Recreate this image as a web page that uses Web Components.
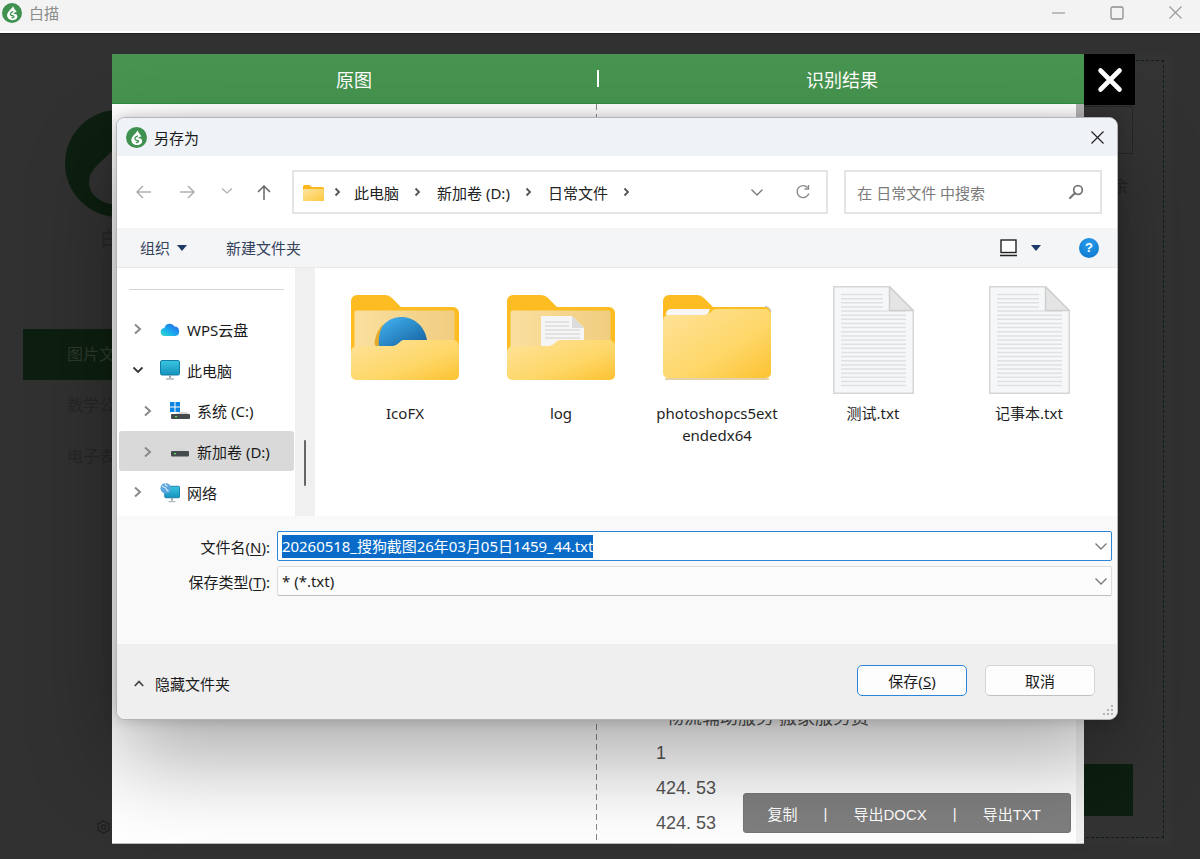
<!DOCTYPE html>
<html lang="zh"><head><meta charset="utf-8"><title>白描</title>
<style>html,body{margin:0;padding:0;background:#313131;font-family:"Noto Sans","Noto Sans CJK SC",sans-serif}</style>
</head><body>
<bm-app>
  <bm-titlebar slot="bar">白描</bm-titlebar>
  <bm-sidebar slot="left"></bm-sidebar>
  <bm-panel slot="right"></bm-panel>
  <bm-modal slot="over"></bm-modal>
  <bm-dialog slot="over"></bm-dialog>
</bm-app>
<script>
const LOGO=(c='#3f9150',w='#fff')=>`<svg viewBox="0 0 24 24" width="100%" height="100%" style="display:block"><circle cx="12" cy="12" r="12" fill="${c}"/><path d="M13.2 3.6C12.6 6.4 8 9 6.4 13c-1.300 4 2 7.600 6.100 7.600 3.900 0 6.300-2.300 5.900-5-.4-2.600-3-3.400-5-2.300.8-1.500 2.300-2.700 4.300-2.500-1.600-2.300-3.500-4.400-4.500-7.200z" fill="${w}"/><path d="M13 10.300c-2.200.8-3.400 2.500-2.600 4 .7 1.300 3.100.6 3.800 1.600.6.900-.7 2-2.300 1.800" fill="none" stroke="${c}" stroke-width="1.500" stroke-linecap="round"/></svg>`;
const def=(n,html,init)=>customElements.define(n,class extends HTMLElement{constructor(){super();const r=this.attachShadow({mode:'open'});r.innerHTML=typeof html==='function'?html(this):html;}connectedCallback(){if(init&&!this._i){this._i=1;init(this)}}});
const chev=(d,col='#8a8a8a',w=2)=>`<svg width="10" height="14" viewBox="0 0 10 14" style="display:block"><path d="${d}" fill="none" stroke="${col}" stroke-width="${w}"/></svg>`;
const smallChev=`<svg width="7" height="10" viewBox="0 0 7 10" style="display:block"><path d="M1.500 1.500 5 5 1.500 8.500" fill="none" stroke="#555" stroke-width="1.800"/></svg>`;
const downChev=`<svg width="14" height="9" viewBox="0 0 14 9" style="display:block"><path d="M1.500 1.500 7 7l5.500-5.500" fill="none" stroke="#777" stroke-width="1.300"/></svg>`;

def('bm-app',`<style>
:host{display:flex;flex-direction:column;width:1200px;height:859px;overflow:hidden;position:relative;background:#313131}
.stage{flex:1;display:flex;justify-content:space-between;background:#313131;border-top:1px solid #232323;min-height:0}
</style><slot name="bar"></slot><div class="stage"><slot name="left"></slot><slot name="right"></slot></div><slot name="over"></slot>`);

def('bm-titlebar',`<style>
:host{display:flex;align-items:center;height:31px;background:#f3f3f3;border-bottom:2px solid #fff;color:#8b8b8b;font-size:15px;padding-left:2px}
.logo{width:20px;height:20px;margin:0 7px 6px 0}
.t{margin-bottom:6px}
.sp{flex:1}
svg{display:block}
.c{display:flex;align-items:center;margin-bottom:6px;padding-right:18px;gap:45px}
</style><div class="logo">${LOGO()}</div><div class="t"><slot></slot></div><div class="sp"></div>
<div class="c">
<svg width="13" height="13" viewBox="0 0 13 13"><path d="M0 7h13" stroke="#9a9a9a" stroke-width="1.200"/></svg>
<svg width="14" height="14" viewBox="0 0 14 14"><rect x="1" y="1" width="12" height="12" rx="1.500" fill="none" stroke="#8f8f8f" stroke-width="1.300"/></svg>
<svg width="13" height="13" viewBox="0 0 13 13"><path d="M.5.500l12 12M12.500.500l-12 12" stroke="#9a9a9a" stroke-width="1.200"/></svg>
</div>`);

def('bm-sidebar',`<style>
:host{display:flex;flex-direction:column;width:200px;padding-left:23px;box-sizing:content-box;color:#262626;font-size:16px}
.logo{width:107px;height:107px;margin:76px 0 0 42px}
.cap{margin:9px 0 0 77px;font-size:19px;line-height:26px;height:26px;color:#262626}
.menu{margin-top:77px;display:flex;flex-direction:column}
.i{height:51px;line-height:51px;padding-left:44px}
.i.on{background:#0d1f10;color:#2b3a2d}
.gear{margin:auto 0 25px 73px;width:15px;height:16px}
</style>
<div class="logo"><svg viewBox="0 0 107 107" width="107" height="107"><circle cx="53.500" cy="53.500" r="53.500" fill="#0c1f10"/><path d="M58 25C52 44 24 54 24 72c0 15 15 23 32 23h30V30z" fill="#313131"/></svg></div>
<div class="cap">白描</div>
<div class="menu"><div class="i on">图片文字</div><div class="i">数学公式</div><div class="i">电子表格</div></div>
<div class="gear"><svg viewBox="0 0 24 24" width="15" height="16" fill="none" stroke="#1f1f1f" stroke-width="2"><path d="M12 2l8.700 5v10L12 22l-8.700-5V7z"/><circle cx="12" cy="12" r="3.600"/></svg></div>`);

def('bm-panel',`<style>
:host{display:block;width:500px;margin:20px 28px 14px 0;background:#333;box-sizing:border-box;padding:6px 8px 7px 0;color:#232323}
.d{height:100%;box-sizing:border-box;border:1px dashed #0e1f12;display:flex;flex-direction:column;align-items:flex-end;padding:45px 30px 21px 0}
.btn{width:120px;height:48px;border:1px solid #262626;box-sizing:border-box}
.u{margin-top:20px;font-size:16px;line-height:24px;align-self:flex-end;margin-right:5px}
.go{margin-top:auto;width:120px;height:52px;background:#0c1f10}
</style><div class="d"><div class="btn"></div><div class="u">余</div><div class="go"></div></div>`);

def('bm-modal',`<style>
:host{position:absolute;left:112px;top:54px;width:972px;height:789px;display:flex;flex-direction:column;background:#fff;font-family:"Liberation Sans","Noto Sans CJK SC",sans-serif;box-shadow:0 1px 0 #bbb}
.h{height:49px;background:#46944f;border-bottom:1px solid #2f8c40;display:grid;grid-template-columns:484px 4px 1fr;align-items:center;color:#fff;font-size:18px;text-align:center;flex:none}
.h i{display:block;width:2px;height:17px;background:#fff;margin:0 auto}
.b{flex:1;display:flex;min-height:0}
.l{width:484px}
.r{flex:1;display:flex;flex-direction:column;justify-content:flex-end;padding:0 0 2px 60px;font-size:18px;color:#555;background:repeating-linear-gradient(#888 0 6px,transparent 6px 10px) left/1px 100% no-repeat}
.r div{height:35px;line-height:35px;white-space:pre}
.s{width:8px;background:#f1f1f1;display:flex;flex-direction:column}
.s b{display:block;height:120px;background:#b5b5b5}
.bar{position:absolute;left:630.500px;bottom:10px;width:328px;height:40px;box-sizing:border-box;background:#7f7f7f;border:1px solid #777;border-radius:3px;display:flex;align-items:center;gap:26px;padding-left:24px;color:#fff;font-size:15px;font-family:"Liberation Sans","Noto Sans CJK SC",sans-serif}
.x{position:absolute;left:972px;top:0;width:51px;height:51px;background:#000;display:flex;align-items:center;justify-content:center}
</style>
<div class="h"><div>原图</div><i></i><div>识别结果</div></div>
<div class="b"><div class="l"></div><div class="r"><div>  物流辅助服务 搬家服务费</div><div>1</div><div>424. 53</div><div>424. 53</div></div><div class="s"><b></b></div></div>
<div class="bar"><span>复制</span><span>|</span><span>导出DOCX</span><span>|</span><span>导出TXT</span></div>
<div class="x"><svg width="26" height="26" viewBox="0 0 26 26"><path d="M3.500 3.500l19 19M22.500 3.500l-19 19" stroke="#fff" stroke-width="4.600" stroke-linecap="round"/></svg></div>`);

def('bm-dialog',`<style>
:host{position:absolute;left:116px;top:117px;width:1002px;height:603px;box-sizing:border-box;border:1px solid #b4b4b4;border-radius:9px;background:#fff;display:flex;flex-direction:column;overflow:hidden;color:#1b1b1b;font-size:15px;box-shadow:0 40px 90px rgba(0,0,0,.33),0 0 14px rgba(0,0,0,.2)}
.ti{height:38px;background:#eff3f8;display:flex;align-items:center;padding:0 13px 0 9px;flex:none}
.ti .lg{width:21px;height:21px;margin-right:7px}
.ti .sp{flex:1}
svg{display:block}
</style>
<div class="ti"><div class="lg">${LOGO()}</div>另存为<div class="sp"></div><svg width="13" height="13" viewBox="0 0 13 13"><path d="M.5.500l12 12M12.500.500l-12 12" stroke="#222" stroke-width="1.200"/></svg></div>
<dlg-nav></dlg-nav><dlg-toolbar></dlg-toolbar><dlg-body></dlg-body><dlg-form></dlg-form><dlg-footer></dlg-footer>`);

const smallFolder=`<svg width="21" height="17" viewBox="0 0 21 17"><path d="M0 2.500A1.500 1.500 0 0 1 1.500 1h5L9 3h10.500A1.500 1.500 0 0 1 21 4.500v11a1.500 1.500 0 0 1-1.500 1.500h-18A1.500 1.500 0 0 1 0 15.500z" fill="#fbb91f"/><path d="M0 6.500A1.500 1.500 0 0 1 1.500 5h18A1.500 1.500 0 0 1 21 6.500v9a1.500 1.500 0 0 1-1.500 1.500h-18A1.500 1.500 0 0 1 0 15.500z" fill="url(#sf)"/><defs><linearGradient id="sf" x1="0" y1="0" x2="1" y2="1"><stop offset="0" stop-color="#fee4a0"/><stop offset="1" stop-color="#fcc93f"/></linearGradient></defs></svg>`;
def('dlg-nav',`<style>
:host{display:flex;align-items:center;height:72px;padding:0 15px 0 0;background:#fff;flex:none}
.icons{width:175px;flex:none;display:flex;align-items:center;position:relative;height:20px}
.icons svg{position:absolute;top:2px}
svg{display:block}
.box{height:44px;box-sizing:border-box;border:2px solid #e4e4e4;display:flex;align-items:center}
.addr{width:537px;padding:0 15px 0 9px;gap:0}
.addr .sp{flex:1}
.seg{margin:0 15px 0 16px;white-space:nowrap;color:#222}
.seg+svg{flex:none}
.srch{width:258px;margin-left:16px;padding:0 16px 0 11px;justify-content:space-between;color:#7a7a7a}
</style>
<div class="icons">
<svg style="left:18px" width="17" height="16" viewBox="0 0 17 16"><path d="M16 8H2M8 2 2 8l6 6" fill="none" stroke="#b0b0b0" stroke-width="1.500"/></svg>
<svg style="left:62px" width="17" height="16" viewBox="0 0 17 16"><path d="M1 8h14M9 2l6 6-6 6" fill="none" stroke="#b0b0b0" stroke-width="1.500"/></svg>
<svg style="left:104px;top:5px" width="12" height="8" viewBox="0 0 12 8"><path d="M1 1.500 6 6l5-4.500" fill="none" stroke="#b0b0b0" stroke-width="1.300"/></svg>
<svg style="left:139px" width="16" height="17" viewBox="0 0 16 17"><path d="M8 16V2M2 8l6-6 6 6" fill="none" stroke="#666" stroke-width="1.500"/></svg>
</div>
<div class="box addr">${smallFolder}<span style="width:10px"></span>${smallChev}<span class="seg" style="margin-left:13px">此电脑</span>${smallChev}<span class="seg">新加卷 (D:)</span>${smallChev}<span class="seg">日常文件</span>${smallChev}<span class="sp"></span>${downChev.replace('#777','#777')}<span style="width:31px"></span><svg width="16" height="16" viewBox="0 0 16 16"><path d="M13.800 9.500A6 6 0 1 1 12.500 3.500M13.500 1v4h-4" fill="none" stroke="#8a8a8a" stroke-width="1.400"/></svg></div>
<div class="box srch"><span>在 日常文件 中搜索</span><svg width="16" height="16" viewBox="0 0 16 16"><circle cx="10" cy="6" r="4.300" fill="none" stroke="#777" stroke-width="1.800"/><path d="M7 9l-5 5" stroke="#777" stroke-width="2.200" stroke-linecap="round"/></svg></div>`);

const caret=`<svg width="10" height="6" viewBox="0 0 10 6" style="display:block"><path d="M0 0h10L5 6z" fill="#1d3a66"/></svg>`;
def('dlg-toolbar',`<style>
:host{display:flex;align-items:center;height:39px;background:#f4f5f7;border-bottom:1px solid #e9e9e9;padding:0 18px 0 23px;color:#34435c;flex:none}
.g{margin-left:7px}.n{margin-left:39px}.sp{flex:1}
svg{display:block}
.h{width:20px;height:20px;border-radius:50%;background:radial-gradient(circle at 50% 30%,#2a9cea,#0a74cc);color:#fff;font:bold 13px/20px "Liberation Sans",sans-serif;text-align:center}
</style><span>组织</span><span class="g">${caret}</span><span class="n">新建文件夹</span><span class="sp"></span>
<svg width="17" height="18" viewBox="0 0 17 18"><rect x="1" y="1" width="15" height="12.500" fill="#fff" stroke="#222" stroke-width="1.400"/><path d="M0 16.500h17" stroke="#222" stroke-width="1.500"/></svg>
<span style="margin:0 38px 0 14px">${caret}</span><div class="h">?</div>`);

const ico={
cloud:`<svg width="20" height="18" viewBox="0 0 20 18"><defs><linearGradient id="cl" x1="0" y1="1" x2="1" y2="0"><stop offset="0" stop-color="#2ee0c4"/><stop offset=".45" stop-color="#1aa8f0"/><stop offset="1" stop-color="#2a5fe8"/></linearGradient></defs><path d="M5 16a4 4 0 0 1-.6-8A5.500 5.500 0 0 1 14.600 6.500a4.800 4.800 0 0 1 .7 9.500z" fill="url(#cl)"/></svg>`,
pc:`<svg width="20" height="20" viewBox="0 0 20 20"><defs><linearGradient id="pc" x1="0" y1="0" x2="0" y2="1"><stop offset="0" stop-color="#38c6e0"/><stop offset="1" stop-color="#1691bd"/></linearGradient></defs><rect x=".5" y=".5" width="19" height="14.500" rx="1.500" fill="url(#pc)" stroke="#147fa6"/><path d="M10 15v3" stroke="#9aa5ab" stroke-width="2"/><path d="M6 19h8" stroke="#aeb6bb" stroke-width="1.500"/></svg>`,
c:`<svg width="20" height="18" viewBox="0 0 20 18"><g fill="#0b84e3"><rect width="4.500" height="4.500"/><rect x="5.500" width="4.500" height="4.500"/><rect y="5.500" width="4.500" height="4.500"/><rect x="5.500" y="5.500" width="4.500" height="4.500"/></g><path d="M5 12l5-2h6l3 2z" fill="#d5d5d5"/><rect x="1" y="12" width="19" height="5" rx="1" fill="#454a4d"/><rect x="5" y="14" width="2" height="1.300" fill="#5fdc5f"/></svg>`,
d:`<svg width="20" height="12" viewBox="0 0 20 12"><path d="M4 4.500C5 2 7 1.500 10 1.500s5 .5 6 3z" fill="#d5d5d5"/><rect x="1" y="5" width="18" height="5.500" rx="1" fill="#454a4d"/><rect x="4" y="7" width="2" height="1.300" fill="#5fdc5f"/></svg>`,
net:`<svg width="21" height="21" viewBox="0 0 21 21"><defs><linearGradient id="nt" x1="0" y1="0" x2="0" y2="1"><stop offset="0" stop-color="#38c6e0"/><stop offset="1" stop-color="#1691bd"/></linearGradient></defs><rect x="5" y="4" width="15.500" height="12" rx="1" fill="url(#nt)" stroke="#147fa6"/><path d="M12.500 16v3" stroke="#9aa5ab" stroke-width="2"/><path d="M9 20h7" stroke="#aeb6bb" stroke-width="1.400"/><circle cx="6" cy="6" r="5.500" fill="#5aa6dd"/><path d="M2 4c2 0 3 1 4 2s1 3 3 3M6 .5c-1 2 0 3 2 3" stroke="#cfe5f5" stroke-width="1.200" fill="none"/></svg>`};
def('dlg-body',`<style>
:host{display:flex;height:248px;background:#fff;flex:none;overflow:hidden}
.tree{width:178px;flex:none;padding-top:21px;box-sizing:border-box}
hr{border:0;height:1px;background:#d5d5d5;margin:0 11px 19px 12px}
.tr{width:20px;background:#f0f0f0;position:relative;flex:none}
.tr i{position:absolute;left:9px;top:172px;width:2px;height:46px;background:#666;border-radius:1px}
.gap{width:13px;flex:none}
.grid{display:grid;grid-template-columns:repeat(5,156px);align-content:start;padding-top:18px;margin-left:-1px}
</style>
<div class="tree"><hr>
<tree-row>${ico.cloud}<span slot="t">WPS云盘</span></tree-row>
<tree-row open>${ico.pc}<span slot="t">此电脑</span></tree-row>
<tree-row level="1">${ico.c}<span slot="t">系统 (C:)</span></tree-row>
<tree-row level="1" sel>${ico.d}<span slot="t">新加卷 (D:)</span></tree-row>
<tree-row>${ico.net}<span slot="t">网络</span></tree-row>
</div><div class="tr"><i></i></div><div class="gap"></div>
<div class="grid">
<file-item><folder-icon kind="blue"></folder-icon><span slot="t">IcoFX</span></file-item>
<file-item><folder-icon kind="doc"></folder-icon><span slot="t">log</span></file-item>
<file-item><folder-icon kind="closed"></folder-icon><span slot="t">photoshopcs5extendedx64</span></file-item>
<file-item><doc-icon></doc-icon><span slot="t">测试.txt</span></file-item>
<file-item><doc-icon></doc-icon><span slot="t">记事本.txt</span></file-item>
</div>`);

def('tree-row',h=>`<style>
:host{display:flex;align-items:center;height:40.750px;padding-left:16px;box-sizing:border-box;position:relative;color:#1b1b1b}
:host([level="1"]){padding-left:26px}
:host([sel])::before{content:"";position:absolute;left:2px;right:1px;top:0;bottom:1px;background:#d9d9d9;border-radius:3px;z-index:0}
.c,.i,.t{position:relative;z-index:1}
.c{width:10px;flex:none}
.i{width:20px;margin-left:17px;flex:none;display:flex;justify-content:center}
.t{margin-left:7px;white-space:nowrap}
</style><span class="c">${h.hasAttribute('open')?chev('M.5 4.500 5 9l4.500-4.500','#333',1.800):chev('M2 2.500 7 7l-5 4.500')}</span><span class="i"><slot></slot></span><span class="t"><slot name="t"></slot></span>`);

def('file-item',`<style>
:host{display:flex;flex-direction:column;align-items:center;color:#1f1f1f}
.ic{height:108px;display:flex;align-items:flex-start;justify-content:center}
.t{margin-top:8px;width:122px;text-align:center;line-height:22px;word-break:break-all}
</style><div class="ic"><slot></slot></div><div class="t"><slot name="t"></slot></div>`);

let uid=0;
def('folder-icon',h=>{const k=h.getAttribute('kind'),u=++uid;
const inner=k==='blue'?`<path d="M25 51C25 33 37 22 50 22c14 0 24 10 26 23H52l-8 6z" fill="url(#bl${u})"/><path d="M27 51c-3 0-4-1-3-6 1-6 4-12 9-17-4 7-6 15-5 23z" fill="#e3a92a"/>`
:k==='doc'?`<path d="M34 21h31l12 12v20H34z" fill="#f5f5f5"/><path d="M65 21v12h12z" fill="#dcdcdc"/><path d="M38 27h24M38 31h24M38 35h35M38 39h35M38 43h35" stroke="#dcdcdc" stroke-width="1.600"/>`:'';
const front=k==='closed'?`<path d="M0 26c0-4 2-6 6-6h36q3 0 6-3l2-2q2-1 4-1h48a6 6 0 0 1 6 6v58a5 5 0 0 1-5 5H5a5 5 0 0 1-5-5z" fill="url(#fr${u})"/><path d="M2 84h104" stroke="#c9a456" stroke-width="1.200"/>`
:`<path d="M0 57a6 6 0 0 1 6-6h36q3 0 6-3l2-2q2-1 4-1h48a6 6 0 0 1 6 6v29a5 5 0 0 1-5 5H5a5 5 0 0 1-5-5z" fill="url(#fr${u})"/>`;
const back=k==='closed'?`<path d="M0 6a6 6 0 0 1 6-6h28q4 0 7 3l9 9h52a6 6 0 0 1 6 6v60H0z" fill="#fcbc22"/><path d="M102 11.500a6 6 0 0 1 6 6" stroke="#b8b8b8" fill="none"/><path d="M3 20c0-4 2-6 5-6h39l-2 5q-2 1-4 1z" fill="#f6f6f6"/>`
:`<path d="M0 6a6 6 0 0 1 6-6h28q4 0 7 3l9 9h52a6 6 0 0 1 6 6v60H0z" fill="#fcbc22"/><rect x="3.500" y="15.500" width="100" height="45" rx="2" fill="url(#in${u})"/>`;
return `<style>:host{display:block;width:108px;height:85px;margin-top:9px}svg{display:block}</style><svg width="108" height="85" viewBox="0 0 108 85"><defs>
<linearGradient id="fr${u}" x1="0" y1="0" x2="1" y2="1"><stop offset="0" stop-color="#fee29a"/><stop offset=".6" stop-color="#fed768"/><stop offset="1" stop-color="#fcc231"/></linearGradient>
<linearGradient id="in${u}" x1="0" y1="0" x2="1" y2="0"><stop offset="0" stop-color="#fadf9e"/><stop offset="1" stop-color="#f0cd80"/></linearGradient>
<linearGradient id="bl${u}" x1="0" y1="0" x2="1" y2="1"><stop offset="0" stop-color="#45b8f5"/><stop offset="1" stop-color="#155f9e"/></linearGradient>
</defs>${back}${inner}${front}</svg>`;});

def('doc-icon','<style>:host{display:block;width:81px;height:108px}svg{display:block}</style><svg></svg>',h=>{
 let l='';for(let y=8.5,i=0;y<100;y+=4.14,i++){l+=`<path d="M8 ${y}H${y<25?50:73}" stroke="#dfe1e4" stroke-width="1.500"/>`;}
 const s=h.shadowRoot.querySelector('svg');s.setAttribute('width',81);s.setAttribute('height',108);s.setAttribute('viewBox','0 0 81 108');
 s.innerHTML=`<path d="M.75.750H56.500L80.250 24.500V107.250H.75z" fill="#f6f7f8" stroke="#d6d6d6" stroke-width="1.500"/>${l}<path d="M56.500.750V24.500H80.250z" fill="#e4e4e4" stroke="#cfcfcf" stroke-width="1.500"/>`;});

def('dlg-form',`<style>
:host{display:grid;grid-template-columns:153px 835px;column-gap:7px;row-gap:5px;grid-auto-rows:30px;align-content:start;align-items:center;height:128px;box-sizing:border-box;padding-top:15px;background:#f9f9f9;flex:none;color:#1b1b1b}
.l{text-align:right;white-space:nowrap}
u{text-underline-offset:2px}
.f{height:30px;box-sizing:border-box;display:flex;align-items:center;justify-content:space-between;padding:0 3px 0 4px;border-radius:2px;white-space:nowrap}
.a{background:#fff;border:1.500px solid #2a86d8;}
.b{background:#fcfcfc;border:1px solid #dcdcdc;border-bottom:1.500px solid #bdbdbd}
.s{background:#0a6cc8;color:#fff;line-height:23px;display:inline-block;letter-spacing:-.04px}
</style>
<div class="l">文件名(<u>N</u>):</div><div class="f a"><span class="s">20260518_搜狗截图26年03月05日1459_44.txt</span>${downChev}</div>
<div class="l">保存类型(<u>T</u>):</div><div class="f b"><span>* (*.txt)</span>${downChev}</div>`);

def('dlg-btn',`<style>
:host{display:flex;align-items:center;justify-content:center;width:110px;height:31px;box-sizing:border-box;background:#fdfdfd;border:1.500px solid #d6d6d6;border-bottom-color:#c0c0c0;border-radius:5px;color:#1b1b1b}
:host([def]){border-color:#2a86d8}
</style><slot></slot>`);

def('dlg-footer',`<style>
:host{display:flex;align-items:center;height:75px;background:#efefef;padding:0 22px 2px 17px;box-sizing:border-box;flex:none;position:relative}
.h{display:flex;align-items:center;gap:11px;margin-top:6px}
.sp{flex:1}
.g{margin-left:18px}
svg{display:block}
.grip{position:absolute;right:2px;bottom:2px}
</style>
<div class="h"><svg width="10" height="7" viewBox="0 0 10 7"><path d="M.8 6 5 1.500 9.200 6" fill="none" stroke="#444" stroke-width="1.800"/></svg><span>隐藏文件夹</span></div><span class="sp"></span>
<dlg-btn def>保存(<u>S</u>)</dlg-btn><dlg-btn class="g">取消</dlg-btn>
<svg class="grip" width="12" height="12" viewBox="0 0 12 12" fill="#b5b5b5"><rect x="8" y="0" width="2" height="2"/><rect x="4" y="4" width="2" height="2"/><rect x="8" y="4" width="2" height="2"/><rect x="0" y="8" width="2" height="2"/><rect x="4" y="8" width="2" height="2"/><rect x="8" y="8" width="2" height="2"/></svg>`);

def('bm-sidebar-done','');
</script>
</body></html>
